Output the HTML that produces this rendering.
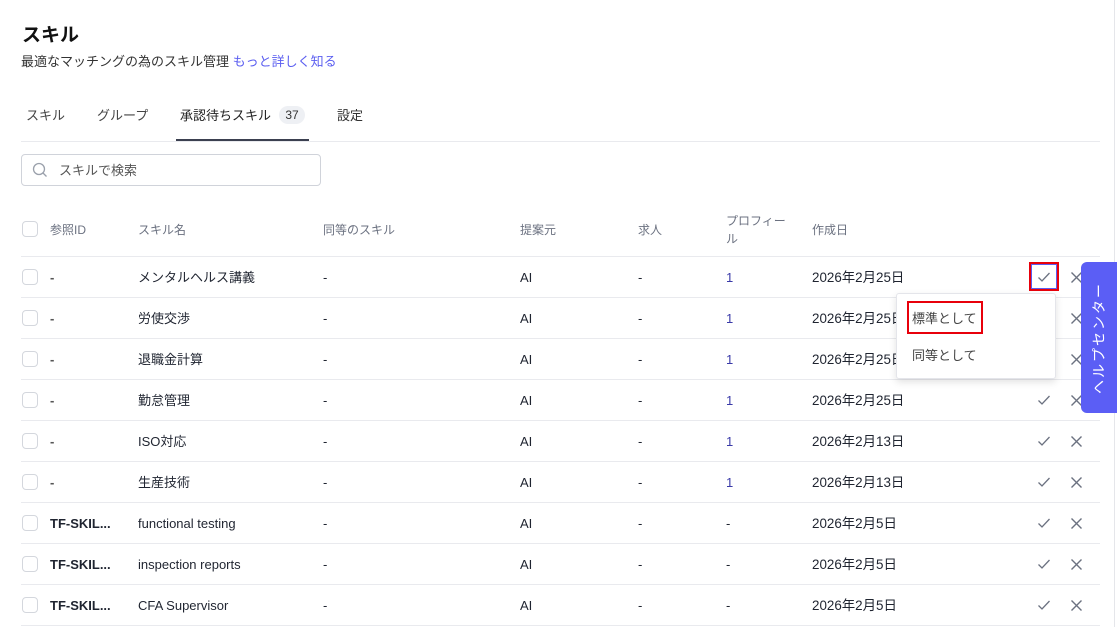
<!DOCTYPE html>
<html><head><meta charset="utf-8"><style>
*{margin:0;padding:0;box-sizing:border-box}
body{width:1117px;height:627px;overflow:hidden;background:#fff;font-family:"Liberation Sans","Noto Sans CJK JP",sans-serif;color:#1f2430;position:relative}
.a{position:absolute;white-space:nowrap;line-height:16px}
.cb{position:absolute;left:22px;width:16px;height:16px;border:1px solid #d4d7dd;border-radius:4px;background:#fff}
.line{position:absolute;left:21px;width:1079px;height:1px;background:#e9eaee}
.t{font-size:13px;color:#1f2430;height:16px;margin-top:1px}
.h{font-size:12px;color:#6b7180;margin-top:1px}
.d{font-size:13.4px}
.ck{position:absolute;left:1037px;width:14px;height:14px}
.x{position:absolute;left:1070px;width:13px;height:13px}
</style></head><body>
<div style="position:absolute;right:2px;top:0;width:1px;height:627px;background:#e5e6ea"></div>
<div class="a" style="left:22px;top:25px;font-size:19px;line-height:22px;font-weight:bold;color:#111">スキル</div>
<div class="a" style="left:21px;top:54px;font-size:13px;color:#333">最適なマッチングの為のスキル管理 <span style="color:#5b5ef0">もっと詳しく知る</span></div>
<div class="a" style="left:26px;top:108px;font-size:13px;color:#444">スキル</div>
<div class="a" style="left:97px;top:108px;font-size:13px;color:#444">グループ</div>
<div class="a" style="left:180px;top:108px;font-size:13px;color:#222">承認待ちスキル</div>
<div class="a" style="left:279px;top:106px;width:26px;height:18px;border-radius:9px;background:#eef0f4;font-size:12px;text-align:center;line-height:18px;color:#333">37</div>
<div class="a" style="left:337px;top:108px;font-size:13px;color:#333">設定</div>
<div style="position:absolute;left:21px;top:141px;width:1079px;height:1px;background:#e9eaee"></div>
<div style="position:absolute;left:176px;top:139px;width:133px;height:2px;background:#3b4050"></div>
<div style="position:absolute;left:21px;top:154px;width:300px;height:32px;border:1px solid #d0d3da;border-radius:4px"></div>
<svg style="position:absolute;left:32px;top:162px" width="16" height="16" viewBox="0 0 16 16"><circle cx="7" cy="7" r="5.5" fill="none" stroke="#9aa0ab" stroke-width="1.3"/><path d="M11 11l3.5 3.5" stroke="#9aa0ab" stroke-width="1.3"/></svg>
<div class="a" style="left:59px;top:163px;font-size:13px;color:#555">スキルで検索</div>

<div class="cb" style="top:221px"></div>
<div class="a h" style="left:50px;top:221px">参照ID</div>
<div class="a h" style="left:138px;top:221px">スキル名</div>
<div class="a h" style="left:323px;top:221px">同等のスキル</div>
<div class="a h" style="left:520px;top:221px">提案元</div>
<div class="a h" style="left:638px;top:221px">求人</div>
<div class="a h" style="left:726px;top:211px;line-height:18px">プロフィー<br>ル</div>
<div class="a h" style="left:812px;top:221px">作成日</div>

<div class="line" style="top:256px"></div>
<div class="cb" style="top:269px"></div><div class="a t" style="left:50px;top:269px;font-weight:bold;color:#555">-</div><div class="a t" style="left:138px;top:269px">メンタルヘルス講義</div><div class="a t" style="left:323px;top:269px">-</div><div class="a t" style="left:520px;top:269px">AI</div><div class="a t" style="left:638px;top:269px">-</div><div class="a t" style="left:726px;top:269px;color:#3a3aa8">1</div><div class="a t d" style="left:812px;top:269px">2026年2月25日</div>
<div class="line" style="top:297px"></div>
<div class="cb" style="top:310px"></div><div class="a t" style="left:50px;top:310px;font-weight:bold;color:#555">-</div><div class="a t" style="left:138px;top:310px">労使交渉</div><div class="a t" style="left:323px;top:310px">-</div><div class="a t" style="left:520px;top:310px">AI</div><div class="a t" style="left:638px;top:310px">-</div><div class="a t" style="left:726px;top:310px;color:#3a3aa8">1</div><div class="a t d" style="left:812px;top:310px">2026年2月25日</div>
<div class="line" style="top:338px"></div>
<div class="cb" style="top:351px"></div><div class="a t" style="left:50px;top:351px;font-weight:bold;color:#555">-</div><div class="a t" style="left:138px;top:351px">退職金計算</div><div class="a t" style="left:323px;top:351px">-</div><div class="a t" style="left:520px;top:351px">AI</div><div class="a t" style="left:638px;top:351px">-</div><div class="a t" style="left:726px;top:351px;color:#3a3aa8">1</div><div class="a t d" style="left:812px;top:351px">2026年2月25日</div>
<div class="line" style="top:379px"></div>
<div class="cb" style="top:392px"></div><div class="a t" style="left:50px;top:392px;font-weight:bold;color:#555">-</div><div class="a t" style="left:138px;top:392px">勤怠管理</div><div class="a t" style="left:323px;top:392px">-</div><div class="a t" style="left:520px;top:392px">AI</div><div class="a t" style="left:638px;top:392px">-</div><div class="a t" style="left:726px;top:392px;color:#3a3aa8">1</div><div class="a t d" style="left:812px;top:392px">2026年2月25日</div>
<div class="line" style="top:420px"></div>
<div class="cb" style="top:433px"></div><div class="a t" style="left:50px;top:433px;font-weight:bold;color:#555">-</div><div class="a t" style="left:138px;top:433px">ISO対応</div><div class="a t" style="left:323px;top:433px">-</div><div class="a t" style="left:520px;top:433px">AI</div><div class="a t" style="left:638px;top:433px">-</div><div class="a t" style="left:726px;top:433px;color:#3a3aa8">1</div><div class="a t d" style="left:812px;top:433px">2026年2月13日</div>
<div class="line" style="top:461px"></div>
<div class="cb" style="top:474px"></div><div class="a t" style="left:50px;top:474px;font-weight:bold;color:#555">-</div><div class="a t" style="left:138px;top:474px">生産技術</div><div class="a t" style="left:323px;top:474px">-</div><div class="a t" style="left:520px;top:474px">AI</div><div class="a t" style="left:638px;top:474px">-</div><div class="a t" style="left:726px;top:474px;color:#3a3aa8">1</div><div class="a t d" style="left:812px;top:474px">2026年2月13日</div>
<div class="line" style="top:502px"></div>
<div class="cb" style="top:515px"></div><div class="a t" style="left:50px;top:515px;font-weight:bold">TF-SKIL...</div><div class="a t" style="left:138px;top:515px">functional testing</div><div class="a t" style="left:323px;top:515px">-</div><div class="a t" style="left:520px;top:515px">AI</div><div class="a t" style="left:638px;top:515px">-</div><div class="a t" style="left:726px;top:515px">-</div><div class="a t d" style="left:812px;top:515px">2026年2月5日</div>
<div class="line" style="top:543px"></div>
<div class="cb" style="top:556px"></div><div class="a t" style="left:50px;top:556px;font-weight:bold">TF-SKIL...</div><div class="a t" style="left:138px;top:556px">inspection reports</div><div class="a t" style="left:323px;top:556px">-</div><div class="a t" style="left:520px;top:556px">AI</div><div class="a t" style="left:638px;top:556px">-</div><div class="a t" style="left:726px;top:556px">-</div><div class="a t d" style="left:812px;top:556px">2026年2月5日</div>
<div class="line" style="top:584px"></div>
<div class="cb" style="top:597px"></div><div class="a t" style="left:50px;top:597px;font-weight:bold">TF-SKIL...</div><div class="a t" style="left:138px;top:597px">CFA Supervisor</div><div class="a t" style="left:323px;top:597px">-</div><div class="a t" style="left:520px;top:597px">AI</div><div class="a t" style="left:638px;top:597px">-</div><div class="a t" style="left:726px;top:597px">-</div><div class="a t d" style="left:812px;top:597px">2026年2月5日</div>
<div class="line" style="top:625px"></div>

<svg width="0" height="0" style="position:absolute"><defs>
<symbol id="c" viewBox="0 0 14 14"><path d="M1.5 7.5l3.5 3.5 7.5-8" fill="none" stroke="#6b7180" stroke-width="1.3"/></symbol>
<symbol id="xx" viewBox="0 0 13 13"><path d="M1.5 1.5l10 10M11.5 1.5l-10 10" stroke="#6b7180" stroke-width="1.4"/></symbol></defs></svg>
<div style="position:absolute;left:1029px;top:262px;width:30px;height:29px;border:2px solid #e8000b;background:#fff"><div style="position:absolute;inset:0;border:1px solid #5b5ef0"></div></div>
<svg class="ck" style="top:270px"><use href="#c"/></svg>
<svg class="ck" style="top:393px"><use href="#c"/></svg>
<svg class="ck" style="top:434px"><use href="#c"/></svg>
<svg class="ck" style="top:475px"><use href="#c"/></svg>
<svg class="ck" style="top:516px"><use href="#c"/></svg>
<svg class="ck" style="top:557px"><use href="#c"/></svg>
<svg class="ck" style="top:598px"><use href="#c"/></svg>
<svg class="x" style="top:271px"><use href="#xx"/></svg>
<svg class="x" style="top:312px"><use href="#xx"/></svg>
<svg class="x" style="top:353px"><use href="#xx"/></svg>
<svg class="x" style="top:394px"><use href="#xx"/></svg>
<svg class="x" style="top:435px"><use href="#xx"/></svg>
<svg class="x" style="top:476px"><use href="#xx"/></svg>
<svg class="x" style="top:517px"><use href="#xx"/></svg>
<svg class="x" style="top:558px"><use href="#xx"/></svg>
<svg class="x" style="top:599px"><use href="#xx"/></svg>

<div style="position:absolute;left:896px;top:293px;width:160px;height:86px;background:#fff;border:1px solid #e4e5ea;border-radius:3px;box-shadow:0 3px 8px rgba(0,0,0,.12)"></div>
<div style="position:absolute;left:907px;top:301px;width:76px;height:33px;border:2px solid #e8000b"></div>
<div class="a" style="left:912px;top:311px;font-size:13px;color:#444">標準として</div>
<div class="a" style="left:912px;top:348px;font-size:13px;color:#444">同等として</div>

<div style="position:absolute;left:1081px;top:262px;width:36px;height:151px;background:#5b5ef5;border-radius:6px 0 0 6px"></div>
<div class="a" style="left:1039px;top:329px;width:120px;text-align:center;transform:rotate(-90deg);font-size:14px;color:#fff;letter-spacing:2px;line-height:18px">ヘルプセンター</div>
</body></html>
